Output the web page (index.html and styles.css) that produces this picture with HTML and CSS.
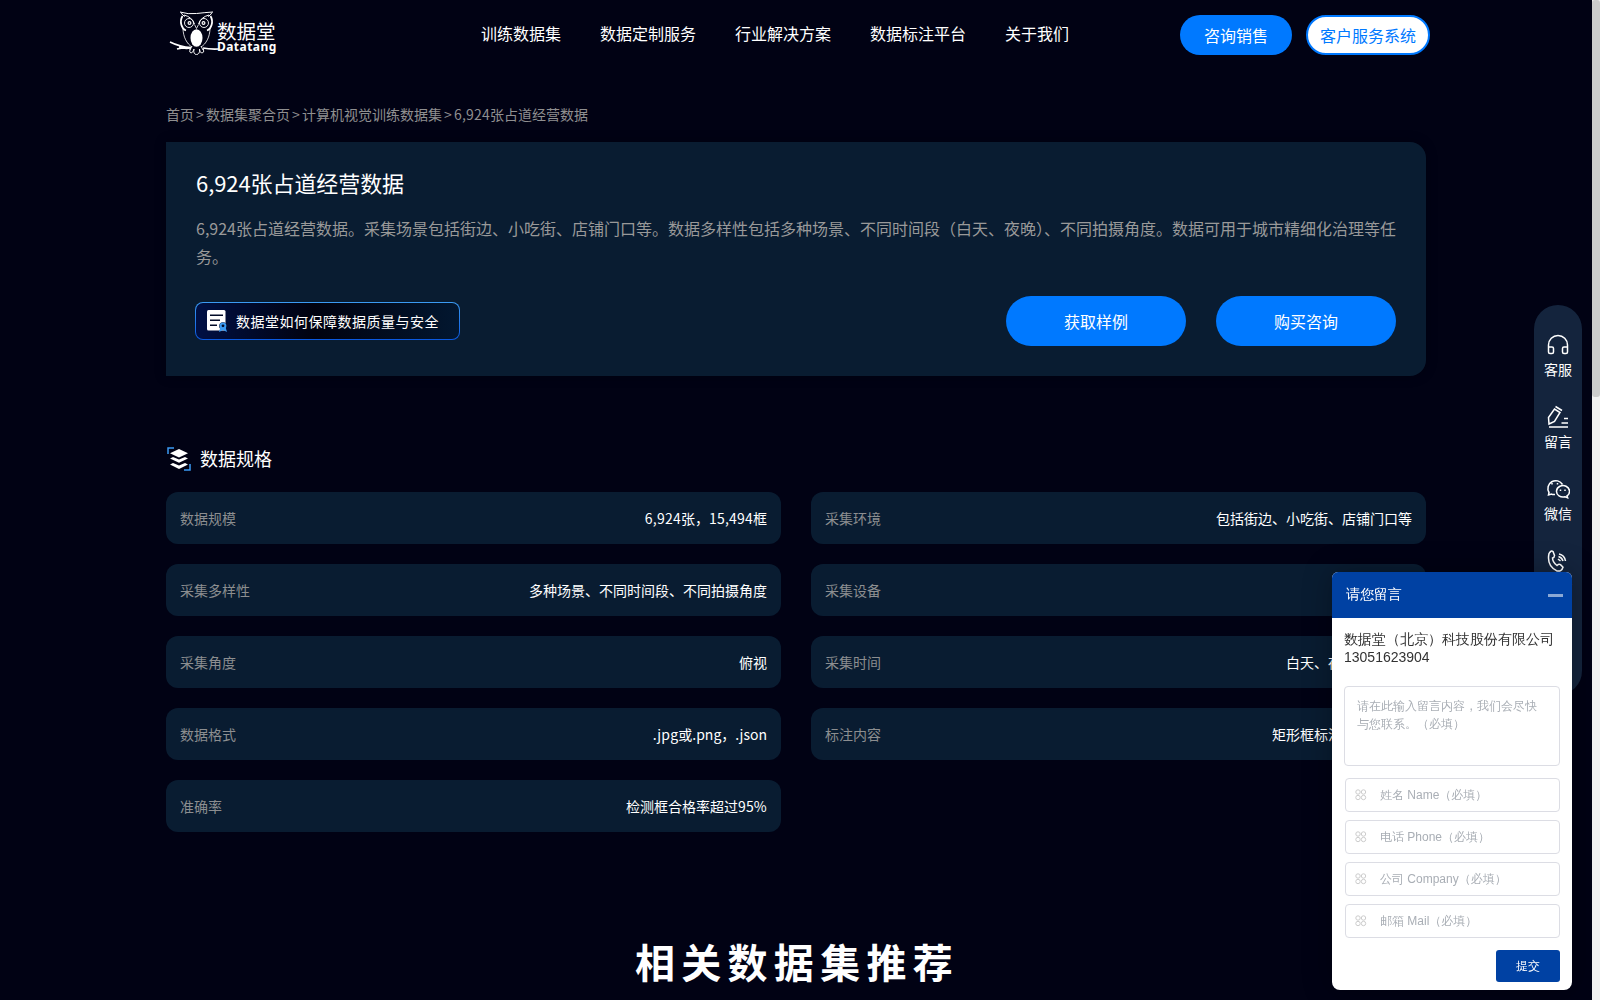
FILE: index.html
```
<!DOCTYPE html>
<html lang="zh-CN">
<head>
<meta charset="utf-8">
<title>6,924张占道经营数据</title>
<link rel="stylesheet" href="styles.css">
</head>
<body>
<div class="page">
  <header class="header">
    <a class="logo">
      <svg class="owl" width="62" height="46" viewBox="0 0 62 46" fill="none" stroke="#fff">
        <path d="M11 1q8 2.500 16.500 1.500T44 1M12 1.500q1.500 3 4 4M43 1.500q-1.500 3-4 4M15 4q8 2 10.500 9M40 4q-8 2-10.500 9" stroke-width="1"/>
        <path d="M13.500 5c-3.500 6-.5 13 3.500 14.500M41.500 5c3.500 6 .5 13-3.500 14.500" stroke-width="1.800"/>
        <path d="M14 17c0 9 4 16 9 19M41 17c0 9-4 16-9 19" stroke-width=".8"/>
        <circle cx="20" cy="12" r="4.500" stroke-width=".9"/><circle cx="35" cy="12" r="4.500" stroke-width=".9"/>
        <circle cx="20.500" cy="12" r="1.400" stroke-width="1.200"/><circle cx="34.500" cy="12" r="1.400" stroke-width="1.200"/>
        <path d="M25.500 13.500l2 4 2-4" stroke-width=".8"/>
        <ellipse cx="27.500" cy="27" rx="6" ry="8.700" fill="#fff" stroke="none"/>
        <path d="M1 31q10 5 21 5.500M8 38q7-2 14-1.500M10 36q5 2 12 1M34 37q7 1.500 16 1" stroke-width="1.600"/>
        <path d="M21 38q-1 4 1 4t3-4q-1 5.500 2.500 5.500t3-5.500q0 4 2.500 4t1.500-4M23 35l-2 4M32 35l2 4" stroke-width=".9"/>
      </svg>
      <span class="logo-text"><b class="logo-cn">数据堂</b><b class="logo-en">Datatang</b></span>
    </a>
    <nav class="nav"><a>训练数据集</a><a>数据定制服务</a><a>行业解决方案</a><a>数据标注平台</a><a>关于我们</a></nav>
    <div class="header-actions"><a class="pill pill-primary">咨询销售</a><a class="pill pill-outline">客户服务系统</a></div>
  </header>
  <main class="main">
    <div class="crumbs"><a>首页</a><i>&gt;</i><a>数据集聚合页</a><i>&gt;</i><a>计算机视觉训练数据集</a><i>&gt;</i><a><span class="num">6,924</span>张占道经营数据</a></div>
    <section class="hero">
      <h1 class="hero-title">6,924张占道经营数据</h1>
      <p class="hero-desc">6,924张占道经营数据。采集场景包括街边、小吃街、店铺门口等。数据多样性包括多种场景、不同时间段（白天、夜晚）、不同拍摄角度。数据可用于城市精细化治理等任务。</p>
      <div class="hero-actions">
        <a class="quality">
          <svg width="21" height="22" viewBox="0 0 21 22"><rect width="18.500" height="20.500" rx="1.500" fill="#fff"/><path d="M3 5.200h13M3 10.300h10M3 15.300h7" stroke="#020b28" stroke-width="1.500"/><circle cx="16" cy="16" r="3.800" fill="#020b28"/><path d="M13.500 17l-1.500 5 4-2 4 2-1.500-5" fill="#3b9bf3"/><circle cx="16" cy="15.800" r="2.400" fill="#020b28" stroke="#3b9bf3" stroke-width="2"/></svg>
          <span>数据堂如何保障数据质量与安全</span>
        </a>
        <div class="cta-group"><a class="cta">获取样例</a><a class="cta">购买咨询</a></div>
      </div>
    </section>
    <h2 class="section-title">
      <svg width="24" height="24" viewBox="0 0 24 24"><path d="M1 7V1h6M17 23h6v-6" fill="none" stroke="#3b9bf3" stroke-width="1.500"/><g fill="#fff"><path d="M12 2l9 4.300-9 4.300-9-4.300z"/><path d="M3 11.500l3-1.500 6 2.600 6-2.600 3 1.500-9 4.300z"/><path d="M3 17.500l3-1.500 6 2.600 6-2.600 3 1.500-9 4.500z"/></g></svg>
      <span>数据规格</span>
    </h2>
    <div class="specs">
      <div class="spec"><span class="label">数据规模</span><span><span class="num">6,924</span>张，<span class="num">15,494</span>框</span></div>
      <div class="spec"><span class="label">采集环境</span><span>包括街边、小吃街、店铺门口等</span></div>
      <div class="spec"><span class="label">采集多样性</span><span>多种场景、不同时间段、不同拍摄角度</span></div>
      <div class="spec"><span class="label">采集设备</span><span>监控摄像头</span></div>
      <div class="spec"><span class="label">采集角度</span><span>俯视</span></div>
      <div class="spec"><span class="label">采集时间</span><span>白天、夜晚等时间段</span></div>
      <div class="spec"><span class="label">数据格式</span><span><span class="num">.jpg</span>或.png，.json</span></div>
      <div class="spec"><span class="label">标注内容</span><span>矩形框标注占道经营物</span></div>
      <div class="spec"><span class="label">准确率</span><span>检测框合格率超过<span class="num">95%</span></span></div>
    </div>
    <h2 class="related">相关数据集推荐</h2>
  </main>
</div>
<aside class="dock">
  <a><svg width="24" height="24" viewBox="0 0 24 24"><path d="M2.500 18V12a9.500 9.500 0 0 1 19 0v6M2.500 14H6q1.500 0 1.500 1.500V19q0 1.500-1.500 1.500H4q-1.500 0-1.500-1.500zM21.500 14H18q-1.500 0-1.500 1.500V19q0 1.500 1.500 1.500h2q1.500 0 1.500-1.500z"/></svg>客服</a>
  <a><svg width="24" height="24" viewBox="0 0 24 24"><path d="M3 19l-.5-6.500L8.500 4l5.500 3.500-5.500 9zM9.500 1.500l6.500 4M3 22h19M15.500 18H22M18 13.500h4"/></svg>留言</a>
  <a><svg width="24" height="24" viewBox="0 0 24 24"><path d="M9 17.500q-2 .3-3.500-.4L2.500 18l.5-2.500A7.500 7.500 0 1 1 16.500 7.500"/><path d="M21 18.800l.6 1.900-2.500-1a6.500 5.700 0 1 1 1.900-.9z"/><path d="M6 6v1.600M11.500 6v1.600M14.500 12.500v1.400M19 12.500v1.400"/></svg>微信</a>
  <a><svg width="24" height="24" viewBox="0 0 24 24"><path d="M3 4.500Q5 1 7 2.500l1.500 4q0 2-2 2.500 0 4 4.500 7.500 2-1.800 3.500-.8l2.500 2.500q-1.500 5-6.500 3.500Q.5 16.500 3 4.500zM13 5q5.500 1 6.500 7M12.500 7.500q3.500 1 4.500 4.500M12 10l2.500 2"/></svg>电话</a>
</aside>
<div class="chat">
  <div class="chat-head"><span>请您留言</span><i class="minimize"></i></div>
  <div class="chat-body">
    <div class="company">数据堂（北京）科技股份有限公司<br>13051623904</div>
    <div class="message">请在此输入留言内容，我们会尽快与您联系。（必填）</div>
    <div class="field"><svg width="12" height="12" viewBox="0 0 12 12"><circle cx="3" cy="3" r="2.200"/><circle cx="8.500" cy="3" r="2.200"/><circle cx="3" cy="8.500" r="2.200"/><circle cx="8.500" cy="8.500" r="2.200"/></svg><span>姓名 Name（必填）</span></div>
    <div class="field"><svg width="12" height="12" viewBox="0 0 12 12"><circle cx="3" cy="3" r="2.200"/><circle cx="8.500" cy="3" r="2.200"/><circle cx="3" cy="8.500" r="2.200"/><circle cx="8.500" cy="8.500" r="2.200"/></svg><span>电话 Phone（必填）</span></div>
    <div class="field"><svg width="12" height="12" viewBox="0 0 12 12"><circle cx="3" cy="3" r="2.200"/><circle cx="8.500" cy="3" r="2.200"/><circle cx="3" cy="8.500" r="2.200"/><circle cx="8.500" cy="8.500" r="2.200"/></svg><span>公司 Company（必填）</span></div>
    <div class="field"><svg width="12" height="12" viewBox="0 0 12 12"><circle cx="3" cy="3" r="2.200"/><circle cx="8.500" cy="3" r="2.200"/><circle cx="3" cy="8.500" r="2.200"/><circle cx="8.500" cy="8.500" r="2.200"/></svg><span>邮箱 Mail（必填）</span></div>
    <div class="submit">提交</div>
  </div>
</div>
<div class="scrollbar"><i class="thumb"></i></div>
</body>
</html>
```
FILE: styles.css
```
* { box-sizing: border-box; }
html, body { margin: 0; height: 100%; overflow: hidden; }
body {
  background: #010214;
  color: #fff;
  font-family: "Noto Sans CJK SC", sans-serif;
  font-size: 14px;
}
i { font-style: normal; }
h1, h2, p { margin: 0; font-weight: 400; }
svg { display: block; flex: none; }
.num { letter-spacing: .22px; }

.page { width: 1592px; }
.header {
  display: flex;
  align-items: flex-start;
  height: 70px;
  padding-left: 169px;
  font-size: 16px;
}
.logo { display: flex; width: 312px; padding-top: 11px; }
.owl { margin-right: -14px; }
.logo-text { display: flex; flex-direction: column; padding-top: 10px; }
.logo-cn { font-size: 19.500px; line-height: 19px; font-weight: 400; }
.logo-en {
  margin-top: 1px;
  font: bold 12px/12px "Noto Sans", sans-serif;
  letter-spacing: .45px;
}
.nav { display: flex; gap: 39px; width: 699px; line-height: 24px; padding-top: 21px; white-space: nowrap; }
.header-actions { display: flex; gap: 14px; padding-top: 15px; }
.pill { height: 40px; line-height: 40px; border-radius: 20px; text-align: center; }
.pill-primary { width: 112px; background: #0079ff; }
.pill-outline { width: 124px; line-height: 36px; background: #fff; color: #0079ff; border: 2px solid #0079ff; }

.main { width: 1260px; margin: 0 auto; }
.crumbs { display: flex; height: 72px; padding-top: 34px; line-height: 21px; color: #8f8f90; }
.crumbs i { width: 12px; text-align: center; }
.hero {
  height: 234px;
  padding: 25px 30px 30px;
  background: #091c31;
  border-radius: 0 16px 16px 0;
  box-shadow: 0 0 12px rgba(0, 0, 0, .25);
}
.hero-title { font-size: 22px; line-height: 30px; letter-spacing: -.08px; }
.hero-desc { margin-top: 17px; font-size: 16px; line-height: 28px; color: #999; }
.hero-actions { display: flex; justify-content: space-between; align-items: center; margin-top: 26px; }
.quality {
  display: flex;
  align-items: center;
  gap: 8px;
  width: 265px;
  height: 38px;
  margin-left: -1px;
  padding-left: 11px;
  border: 1px solid transparent;
  border-radius: 8px;
  background: linear-gradient(90deg, #001044, #01020f 45%, #021730) padding-box, linear-gradient(#3b9bf3, #0a58e0) border-box;
  letter-spacing: .5px;
}
.cta-group { display: flex; gap: 30px; }
.cta { width: 180px; height: 50px; line-height: 50px; border-radius: 25px; background: #0079ff; font-size: 16px; text-align: center; }
.section-title { display: flex; align-items: center; gap: 9px; height: 26px; margin: 70px 0 20px 1px; font-size: 18px; }
.section-title span { padding-bottom: 2px; }
.specs { display: grid; grid-template-columns: 1fr 1fr; gap: 20px 30px; }
.spec { display: flex; justify-content: space-between; align-items: center; height: 52px; padding: 0 14px; border-radius: 12px; background: #091c31; }
.label { color: #8c8e90; }
.related { margin-top: 99px; padding-left: 2px; font-size: 40px; line-height: 60px; font-weight: 700; letter-spacing: 6.300px; text-align: center; }

.dock {
  position: fixed;
  left: 1534px;
  top: 305px;
  width: 48px;
  height: 390px;
  padding-top: 28px;
  border-radius: 24px;
  background: #14243d;
}
.dock a { display: flex; flex-direction: column; align-items: center; height: 72px; line-height: 24px; }
.dock svg { fill: none; stroke: #fff; stroke-width: 1.500; }

.chat {
  position: fixed;
  left: 1332px;
  top: 572px;
  width: 240px;
  height: 418px;
  border-radius: 6px 6px 8px 8px;
  overflow: hidden;
  background: #fff;
  box-shadow: 0 0 30px rgba(0, 0, 0, .3);
  font-family: "Liberation Sans", "WenQuanYi Zen Hei Sharp", "WenQuanYi Zen Hei", "Noto Sans CJK SC", sans-serif;
  text-spacing-trim: space-all;
}
.chat-head { display: flex; justify-content: space-between; align-items: center; height: 46px; padding: 0 9px 0 14px; background: #0041a3; }
.chat-head span { padding-bottom: 1px; }
.minimize { width: 15px; height: 3px; background: #8aa8d5; }
.chat-body { display: flex; flex-direction: column; padding: 12px 12px 0; font-size: 12px; color: #a9aeb5; }
.company { height: 56px; font-size: 14px; line-height: 18px; color: #333; white-space: nowrap; }
.message { width: 216px; height: 80px; padding: 10px 20px 10px 12px; margin-bottom: 12px; line-height: 18px; border: 1px solid #dcdde4; border-radius: 4px; }
.field { display: flex; align-items: center; gap: 13px; width: 215px; height: 34px; margin: 0 0 8px 1px; padding-left: 9px; border: 1px solid #dcdde4; border-radius: 4px; }
.field svg { fill: none; stroke: #ccc; stroke-width: 1; }
.submit { align-self: flex-end; width: 64px; height: 32px; margin-top: 4px; line-height: 32px; text-align: center; border-radius: 3px; background: #0041a3; color: #fff; }

.scrollbar { position: fixed; right: 0; top: 0; width: 8px; height: 1000px; background: #f1f1f1; }
.thumb { display: block; height: 397px; border-radius: 3px; background: #ccc; }
```
